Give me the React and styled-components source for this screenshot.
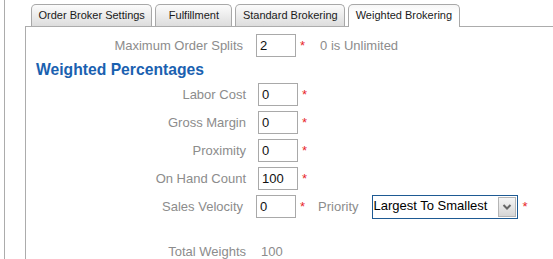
import styled, { createGlobalStyle } from "styled-components";

const Global = createGlobalStyle`
  body {
    margin: 0;
    background: #fff;
    font-family: "Liberation Sans", Arial, sans-serif;
  }
`;

export default function App() {
  return (
    <>
      <Global />
      <Page>
        <TabBar>
          <Tab>Order Broker Settings</Tab>
          <Tab>Fulfillment</Tab>
          <Tab>Standard Brokering</Tab>
          <Tab $active>Weighted Brokering</Tab>
        </TabBar>
        <Panel>
          <Row>
            <Label $tight>Maximum Order Splits</Label>
            <Field defaultValue="2" />
            <Star>*</Star>
            <Hint>0 is Unlimited</Hint>
          </Row>
          <Heading>Weighted Percentages</Heading>
          <Row>
            <Label>Labor Cost</Label>
            <Field defaultValue="0" />
            <Star>*</Star>
          </Row>
          <Row>
            <Label>Gross Margin</Label>
            <Field defaultValue="0" />
            <Star>*</Star>
          </Row>
          <Row>
            <Label>Proximity</Label>
            <Field defaultValue="0" />
            <Star>*</Star>
          </Row>
          <Row>
            <Label>On Hand Count</Label>
            <Field defaultValue="100" />
            <Star>*</Star>
          </Row>
          <Row>
            <Label $tight>Sales Velocity</Label>
            <Field defaultValue="0" />
            <Star>*</Star>
            <Inline>Priority</Inline>
            <Select>
              <SelectText>Largest To Smallest</SelectText>
              <SelectButton>
                <svg width="10" height="6" viewBox="0 0 10 6">
                  <path d="M1.5 1 L5 4.5 L8.5 1" fill="none" stroke="#666" strokeWidth="2" />
                </svg>
              </SelectButton>
            </Select>
            <Star $gap={5}>*</Star>
          </Row>
          <TotalRow>
            <Label $total>Total Weights</Label>
            <Value>100</Value>
          </TotalRow>
        </Panel>
      </Page>
    </>
  );
}

const Page = styled.div`
  margin-left: 4px;
  border-left: 1px solid #acacac;
  padding-left: 20px;
  min-height: 259px;
  box-sizing: border-box;
  display: flex;
  flex-direction: column;
`;

const TabBar = styled.div`
  display: flex;
  align-items: flex-end;
  gap: 3px;
  padding: 4px 0 0 6px;
`;

const Tab = styled.div`
  box-sizing: border-box;
  height: ${(p) => (p.$active ? "23px" : "22px")};
  margin-bottom: ${(p) => (p.$active ? "-1px" : "0")};
  position: relative;
  z-index: ${(p) => (p.$active ? 1 : 0)};
  min-width: 77px;
  padding: 0 6.5px;
  border: 1px solid #a8a8a8;
  border-bottom: none;
  border-radius: 5px 5px 0 0;
  background: ${(p) =>
    p.$active
      ? "linear-gradient(#f6f6f6, #ffffff 40%)"
      : "linear-gradient(#fbfbfb, #dddddd)"};
  font-size: 11px;
  line-height: 20px;
  color: #1a1a1a;
  text-align: center;
  white-space: nowrap;
`;

const Panel = styled.div`
  flex: 1;
  border-top: 1px solid #acacac;
  border-left: 1px solid #acacac;
  padding-top: 7px;
`;

const Row = styled.div`
  display: flex;
  align-items: center;
  height: 23px;
  & + & {
    margin-top: 5px;
  }
`;

const Label = styled.div`
  width: ${(p) => (p.$tight ? "217px" : "220px")};
  margin-right: ${(p) => (p.$total ? "15px" : p.$tight ? "13px" : "12px")};
  text-align: right;
  font-size: 13px;
  color: #8c8c8c;
  white-space: nowrap;
`;

const Field = styled.input`
  box-sizing: border-box;
  width: 40px;
  height: 23px;
  border: 1px solid #a9a9a9;
  padding: 0 3px;
  margin: 0;
  font-family: inherit;
  font-size: 13px;
  color: #111;
  background: #fff;
  outline: none;
`;

const Star = styled.span`
  margin-left: ${(p) => p.$gap ?? 4}px;
  align-self: flex-start;
  margin-top: 4px;
  font-size: 13px;
  color: #e8262a;
`;

const Hint = styled.span`
  margin-left: 15px;
  font-size: 13px;
  color: #8c8c8c;
`;

const Heading = styled.h3`
  margin: 4px 0 4px 10px;
  font-size: 15.7px;
  line-height: 18px;
  font-weight: bold;
  color: #1a61b0;
`;

const Inline = styled.span`
  margin-left: 13px;
  margin-right: 13px;
  font-size: 13px;
  color: #8c8c8c;
`;

const Select = styled.div`
  box-sizing: border-box;
  width: 146px;
  height: 24px;
  border: 1px solid #1e5a93;
  display: flex;
  align-items: flex-start;
  justify-content: space-between;
  background: #fff;
`;

const SelectText = styled.span`
  padding: 2px 0 0 1px;
  font-size: 13px;
  line-height: 15px;
  color: #000;
  white-space: nowrap;
`;

const SelectButton = styled.div`
  box-sizing: border-box;
  width: 18px;
  height: 20px;
  margin: 1px 1px 0 0;
  border: 1px solid #b5b5b5;
  background: linear-gradient(#f5f5f5, #d6d6d6);
  display: flex;
  align-items: center;
  justify-content: center;
`;

const TotalRow = styled.div`
  display: flex;
  align-items: center;
  margin-top: 26px;
  line-height: 15px;
`;

const Value = styled.span`
  font-size: 13px;
  color: #8c8c8c;
`;
